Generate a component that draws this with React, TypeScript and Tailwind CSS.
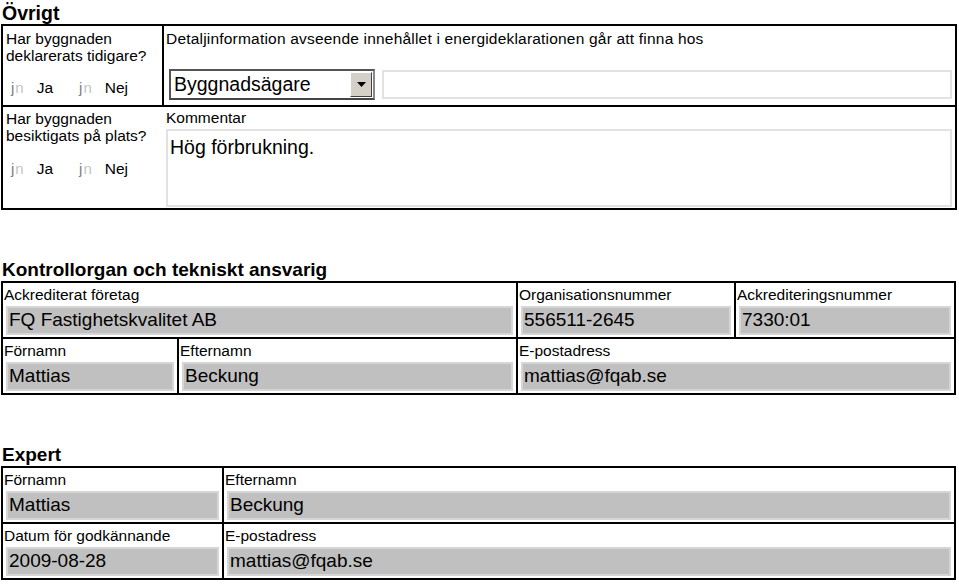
import React from 'react';

const font = { fontFamily: '"Liberation Sans", Arial, sans-serif' };

function Radio({ label }: { label: string }) {
  return (
    <span className="flex items-center">
      <span className="text-[15px] leading-none text-[#7e7e7e]">j</span>
      <span className="text-[15px] leading-none text-[#c4c4c4] ml-[1px]">n</span>
      <span className="text-[15.5px] leading-none text-black ml-[13px]">{label}</span>
    </span>
  );
}

function Field({ label, value, className = '' }: { label: string; value?: string; className?: string }) {
  return (
    <div className={`flex flex-col px-[3px] pt-[3px] pb-[2px] ${className}`}>
      <div className="text-[15.5px] leading-[17px] text-black -ml-[2px]">{label}</div>
      <div className="mt-[3px] h-[29px] bg-[#c0c0c0] border-2 border-[#d6d6d6] flex items-center pl-[1px] text-[19px] text-black">
        {value}
      </div>
    </div>
  );
}

export default function App() {
  return (
    <div className="w-[959px] h-[584px] bg-white text-black overflow-hidden pl-[1px]" style={font}>
      <h2 className="text-[19.5px] font-bold leading-[22px] pt-[2px] pl-[1px]">Övrigt</h2>
      <div className="w-[956px] border-2 border-black">
        <div className="flex h-[81px] border-b-2 border-black">
          <div className="w-[161px] border-r-2 border-black pl-[3px] pt-[4px]">
            <div className="text-[15.5px] leading-[17px]">
              Har byggnaden
              <br />
              deklarerats tidigare?
            </div>
            <div className="flex mt-[16px] ml-[5px]">
              <Radio label="Ja" />
              <span className="ml-[26px]">
                <Radio label="Nej" />
              </span>
            </div>
          </div>
          <div className="flex-1 pl-[2px] pt-[4px]">
            <div className="text-[15.5px] leading-[17px] tracking-[0.2px]">
              Detaljinformation avseende innehållet i energideklarationen går att finna hos
            </div>
            <div className="flex mt-[22px] pl-[3px] pr-[3px] gap-[7px]">
              <div className="w-[206px] h-[31px] border-2 border-t-[#555] border-l-[#555] border-b-[#444] border-r-[#888] flex items-center justify-between bg-white">
                <span className="text-[19.5px] pl-[3px]">Byggnadsägare</span>
                <span className="w-[22px] h-[25px] bg-[#d4d0c8] border border-t-white border-l-white border-b-[#404040] border-r-[#404040] flex items-center justify-center mr-[1px]">
                  <svg width="9" height="5" viewBox="0 0 9 5">
                    <path d="M0 0h9L4.5 5z" fill="#000" />
                  </svg>
                </span>
              </div>
              <div className="flex-1 h-[29px] mt-[1px] border-2 border-[#e2e2e2] bg-white" />
            </div>
          </div>
        </div>
        <div className="flex h-[101px]">
          <div className="w-[161px] pl-[3px] pt-[3px]">
            <div className="text-[15.5px] leading-[17px]">
              Har byggnaden
              <br />
              besiktigats på plats?
            </div>
            <div className="flex mt-[17px] ml-[5px]">
              <Radio label="Ja" />
              <span className="ml-[26px]">
                <Radio label="Nej" />
              </span>
            </div>
          </div>
          <div className="flex-1 pl-[2px] pt-[2px] pr-[3px] flex flex-col">
            <div className="text-[15.5px] leading-[17px]">Kommentar</div>
            <div className="mt-[3px] h-[78px] border-2 border-[#e2e2e2] pl-[2px] pt-[5px] text-[19.5px] leading-[22px]">
              Hög förbrukning.
            </div>
          </div>
        </div>
      </div>

      <h2 className="text-[19px] font-bold leading-[22px] mt-[49px] pl-[1px]">Kontrollorgan och tekniskt ansvarig</h2>
      <div className="w-[955px] border-2 border-black">
        <div className="flex border-b-2 border-black">
          <Field label="Ackrediterat företag" value="FQ Fastighetskvalitet AB" className="w-[515px] border-r-2 border-black" />
          <Field label="Organisationsnummer" value="556511-2645" className="w-[218px] border-r-2 border-black" />
          <Field label="Ackrediteringsnummer" value="7330:01" className="flex-1" />
        </div>
        <div className="flex">
          <Field label="Förnamn" value="Mattias" className="w-[176px] border-r-2 border-black" />
          <Field label="Efternamn" value="Beckung" className="w-[339px] border-r-2 border-black" />
          <Field label="E-postadress" value="mattias@fqab.se" className="flex-1" />
        </div>
      </div>

      <h2 className="text-[19px] font-bold leading-[22px] mt-[49px] pl-[1px]">Expert</h2>
      <div className="w-[955px] border-2 border-black">
        <div className="flex border-b-2 border-black">
          <Field label="Förnamn" value="Mattias" className="w-[221px] border-r-2 border-black" />
          <Field label="Efternamn" value="Beckung" className="flex-1" />
        </div>
        <div className="flex">
          <Field label="Datum för godkännande" value="2009-08-28" className="w-[221px] border-r-2 border-black" />
          <Field label="E-postadress" value="mattias@fqab.se" className="flex-1" />
        </div>
      </div>
    </div>
  );
}
